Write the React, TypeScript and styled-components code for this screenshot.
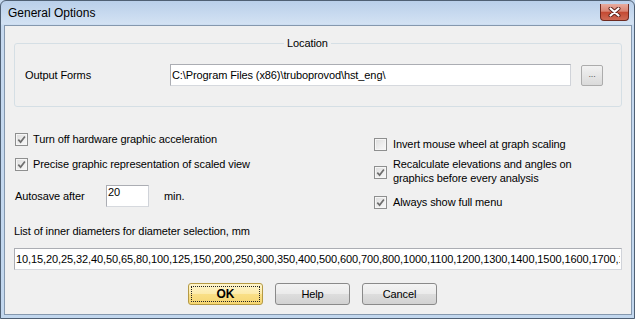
import styled, { createGlobalStyle } from "styled-components";

const GlobalStyle = createGlobalStyle`
  html, body {
    margin: 0;
    padding: 0;
    background: #c4d8ee;
  }
  body {
    font-family: "Liberation Sans", Arial, sans-serif;
    color: #000;
  }
`;

const Window = styled.div`
  box-sizing: border-box;
  width: 635px;
  height: 319px;
  display: flex;
  flex-direction: column;
  padding: 0 2px 3px 3px;
  border: 1px solid #4f6074;
  border-radius: 6px 6px 0 0;
  background: linear-gradient(180deg, #b9cfea 0px, #d3e2f3 23px, #c6d9ef 24px, #c2d7ee 100%);
  overflow: hidden;
`;

const TitleBar = styled.div`
  height: 24px;
  flex: none;
  display: flex;
  align-items: flex-start;
  justify-content: space-between;
  padding-left: 4px;
`;

const Title = styled.span`
  font-size: 12px;
  line-height: 25px;
`;

const CloseButton = styled.div`
  box-sizing: border-box;
  width: 29px;
  height: 17px;
  margin: 3px 3px 0 0;
  border: 1px solid #6e2a20;
  border-top: none;
  border-radius: 0 0 4px 4px;
  background: linear-gradient(180deg, #e8ab9e 0%, #d98472 45%, #c44a33 52%, #cf6b55 100%);
  display: flex;
  align-items: center;
  justify-content: center;
`;

const Client = styled.div`
  flex: 1;
  display: flex;
  flex-direction: column;
  background: #f0f0f0;
  border: 1px solid #8598ae;
  padding: 11px 9px 0 9px;
  font-size: 11px;
  letter-spacing: -0.1px;
`;

const Group = styled.fieldset`
  margin: 0;
  min-width: 0;
  padding: 14px 18px 20px 0;
  border: 1px solid #d5dfe5;
  border-radius: 3px;
`;

const Legend = styled.legend`
  margin-left: 269px;
  padding: 0 3px;
  font-size: 11px;
  line-height: 13px;
`;

const FieldRow = styled.div`
  display: flex;
  align-items: center;
  margin-left: 10px;
`;

const FieldLabel = styled.span<{ $width: number }>`
  flex: none;
  width: ${(p) => p.$width}px;
  line-height: 13px;
`;

const TextBox = styled.input<{ $width?: number; $lift?: boolean }>`
  box-sizing: border-box;
  flex: none;
  width: ${(p) => (p.$width ? `${p.$width}px` : "100%")};
  height: 22px;
  margin: 0;
  padding: ${(p) => (p.$lift ? "0 1px 9px" : "0 1px")};
  border: 1px solid #abadb3;
  border-right-color: #d0d3d9;
  border-bottom-color: #d6d9de;
  background: #fff;
  font-family: inherit;
  font-size: 11px;
  letter-spacing: -0.1px;
  color: #000;
  outline: none;
`;

const BrowseButton = styled.div`
  box-sizing: border-box;
  flex: none;
  width: 22px;
  height: 21px;
  margin-left: 10px;
  border: 1px solid #acacac;
  border-radius: 2px;
  background: linear-gradient(180deg, #f2f2f2 0%, #e6e6e6 50%, #dadada 100%);
  display: flex;
  align-items: center;
  justify-content: center;
  color: #555;
  font-size: 9px;
  line-height: 9px;
  padding-bottom: 2px;
`;

const Options = styled.div`
  display: grid;
  grid-template-columns: 359px 1fr;
  margin-top: 26px;
  padding-left: 1px;
`;

const Column = styled.div<{ $pt?: number }>`
  display: flex;
  flex-direction: column;
  padding-top: ${(p) => p.$pt ?? 0}px;
`;

const CheckRow = styled.label<{ $mt?: number; $gap?: number; $lh?: number }>`
  display: flex;
  align-items: flex-start;
  gap: ${(p) => p.$gap ?? 5}px;
  margin-top: ${(p) => p.$mt ?? 0}px;
  line-height: ${(p) => p.$lh ?? 13}px;
`;

const Box = styled.span<{ $offset?: number }>`
  box-sizing: border-box;
  flex: none;
  width: 13px;
  height: 13px;
  margin-top: ${(p) => p.$offset ?? 0}px;
  border: 1px solid #8e8f8f;
  background: linear-gradient(135deg, #dcdcdc 0%, #efefef 60%, #f8f8f8 100%);
  box-shadow: inset 0 0 0 1px #f6f6f6;
  display: flex;
  align-items: center;
  justify-content: center;
`;

const AutosaveRow = styled.div`
  display: flex;
  align-items: center;
  height: 22px;
  margin-top: 14px;
`;

const Unit = styled.span`
  margin-left: 15px;
`;

const ListLabel = styled.div`
  margin-top: 16px;
  line-height: 13px;
`;

const ListBox = styled.div`
  margin-top: 10px;
`;

const ButtonRow = styled.div`
  display: flex;
  gap: 12px;
  margin-top: 13px;
  padding-left: 174px;
`;

const Button = styled.div<{ $primary?: boolean }>`
  position: relative;
  box-sizing: border-box;
  width: 75px;
  height: 22px;
  border: 1px solid ${(p) => (p.$primary ? "#b59a45" : "#8a8a8a")};
  border-radius: 3px;
  background: ${(p) =>
    p.$primary
      ? "linear-gradient(180deg, #fef5cc 0%, #fcebac 48%, #f9df86 52%, #f6d671 100%)"
      : "linear-gradient(180deg, #f4f4f4 0%, #ebebeb 48%, #dddddd 52%, #d2d2d2 100%)"};
  display: flex;
  align-items: center;
  justify-content: center;
  font-size: ${(p) => (p.$primary ? "12px" : "11px")};
  font-weight: ${(p) => (p.$primary ? 700 : 400)};

  &::after {
    content: "";
    display: ${(p) => (p.$primary ? "block" : "none")};
    position: absolute;
    inset: 2px;
    border: 1px dotted #222;
  }
`;

function CheckMark() {
  return (
    <svg width="9" height="9" viewBox="0 0 9 9">
      <path d="M1.3 4.6 L3.6 7.1 L7.9 1.6" fill="none" stroke="#6f6f6f" strokeWidth="1.7" />
    </svg>
  );
}

function CloseIcon() {
  return (
    <svg width="13" height="10" viewBox="0 0 13 10">
      <path d="M2.5 1.5 L10.5 8.5 M10.5 1.5 L2.5 8.5" stroke="#5b2018" strokeWidth="4" strokeLinecap="round" />
      <path d="M2.5 1.5 L10.5 8.5 M10.5 1.5 L2.5 8.5" stroke="#ffffff" strokeWidth="2.2" strokeLinecap="round" />
    </svg>
  );
}

type CheckProps = {
  label: React.ReactNode;
  checked?: boolean;
  mt?: number;
  gap?: number;
  lh?: number;
  boxOffset?: number;
};

function Check({ label, checked, mt, gap, lh, boxOffset }: CheckProps) {
  return (
    <CheckRow $mt={mt} $gap={gap} $lh={lh}>
      <Box $offset={boxOffset}>{checked && <CheckMark />}</Box>
      <span>{label}</span>
    </CheckRow>
  );
}

const diameters =
  "10,15,20,25,32,40,50,65,80,100,125,150,200,250,300,350,400,500,600,700,800,1000,1100,1200,1300,1400,1500,1600,1700,1800,2000";

export default function App() {
  return (
    <>
      <GlobalStyle />
      <Window>
        <TitleBar>
          <Title>General Options</Title>
          <CloseButton>
            <CloseIcon />
          </CloseButton>
        </TitleBar>
        <Client>
          <Group>
            <Legend>Location</Legend>
            <FieldRow>
              <FieldLabel $width={145}>Output Forms</FieldLabel>
              <TextBox $width={401} readOnly value={"C:\\Program Files (x86)\\truboprovod\\hst_eng\\"} />
              <BrowseButton>...</BrowseButton>
            </FieldRow>
          </Group>

          <Options>
            <Column>
              <Check checked label="Turn off hardware graphic acceleration" />
              <Check checked mt={12} label="Precise graphic representation of scaled view" />
              <AutosaveRow>
                <FieldLabel $width={91}>Autosave after</FieldLabel>
                <TextBox $width={43} $lift readOnly value="20" />
                <Unit>min.</Unit>
              </AutosaveRow>
            </Column>
            <Column $pt={5}>
              <Check gap={6} label="Invert mouse wheel at graph scaling" />
              <Check
                checked
                gap={6}
                mt={6}
                lh={14}
                boxOffset={9}
                label={
                  <>
                    Recalculate elevations and angles on
                    <br />
                    graphics before every analysis
                  </>
                }
              />
              <Check checked gap={6} mt={11} label="Always show full menu" />
            </Column>
          </Options>

          <ListLabel>List of inner diameters for diameter selection, mm</ListLabel>
          <ListBox>
            <TextBox readOnly value={diameters} />
          </ListBox>

          <ButtonRow>
            <Button $primary>OK</Button>
            <Button>Help</Button>
            <Button>Cancel</Button>
          </ButtonRow>
        </Client>
      </Window>
    </>
  );
}
